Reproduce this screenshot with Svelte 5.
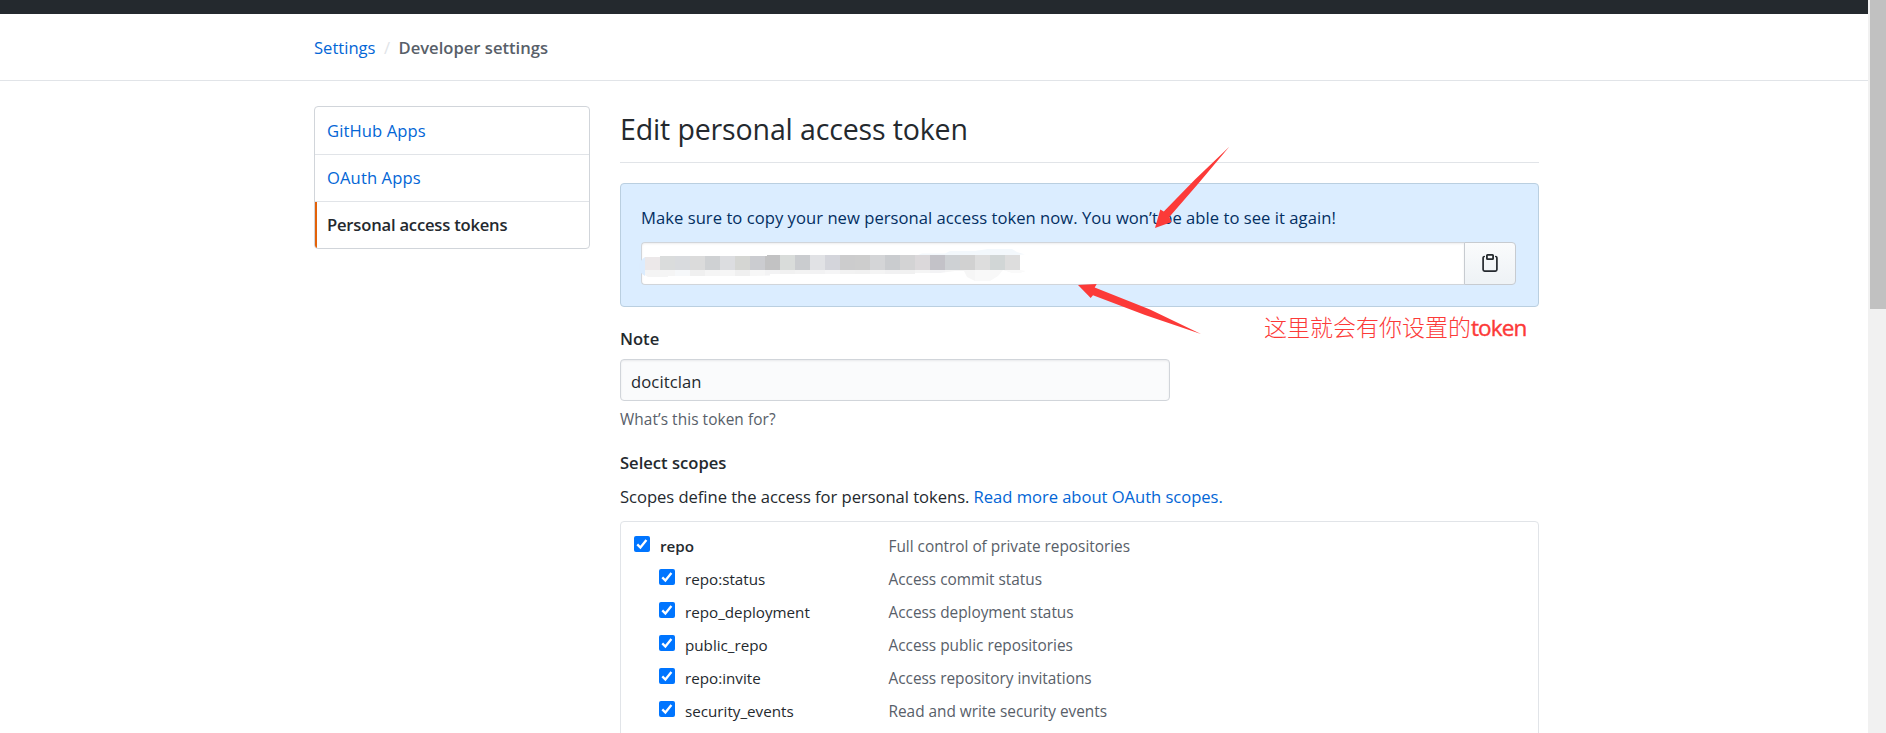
<script>
  const links = ['GitHub Apps', 'OAuth Apps', 'Personal access tokens'];
  const scopes = [
    ['repo', 'Full control of private repositories'],
    ['repo:status', 'Access commit status'],
    ['repo_deployment', 'Access deployment status'],
    ['public_repo', 'Access public repositories'],
    ['repo:invite', 'Access repository invitations'],
    ['security_events', 'Read and write security events']
  ];
  const upper = ['#ece8e9', '#dadcdc', '#d9dbde', '#dbdbdb', '#cfd1d3', '#dcdde0', '#d5d6d3', '#cbccd0', '#c2c2c3', '#d9dcda', '#cacccf', '#e1e2e5', '#d4d5db', '#cccccd', '#cdcdcd', '#d4d5d7', '#cacccf', '#d3d3d4', '#dbd8da', '#c3c2c8', '#ced1d4', '#d1d1d1', '#dddddd', '#d1d6d6', '#dddddd'];
  const lower = ['#f4f4f4', '#f5f5f5', '#f6f8fa', '#f0f0f0', '#f5f5f5', '#f6f6f6', '#f0f0f0', '#f7f7f7', '#f3f3f4', '#f1f1f1', '#f3f3f3', '#f2f2f3', '#f5f5f6', '#f2f2f2', '#f1f1f1', '#f4f4f4', '#f1f1f2', '#f1f1f1', '#f5f5f5', '#f3f3f5', '#f6f6f6', '#f6f6f6', '#f9f9f9', '#f8f8f8', '#f8f8f8'];
</script>

<div class="page">
  <div class="main">
    <div class="topbar"></div>
    <header>
      <div class="wrap crumbs"><a href="#settings">Settings</a><span class="slash">/</span><strong>Developer settings</strong></div>
    </header>
    <div class="wrap columns">
      <nav>
        {#each links as label, i}<a href="#nav" class:on={i === 2}>{label}</a>{/each}
      </nav>
      <section>
        <h1>Edit personal access token</h1>
        <div class="flash">
          <p>Make sure to copy your new personal access token now. You won’t be able to see it again!</p>
          <div class="group">
            <div class="token"></div>
            <button aria-label="Copy token">
              <svg width="16" height="18" viewBox="0 0 16 18" fill="none" stroke="#24292e">
                <path stroke-width="1.7" stroke-linecap="round" d="M2.200 2.500Q1.100 2.700 1.100 3.800V15.600Q1.100 17.100 2.600 17.100H13.400Q14.900 17.100 14.900 15.600V3.800Q14.900 2.700 13.800 2.500" />
                <rect x="4.900" y=".9" width="6.200" height="4.200" rx=".6" stroke-width="1.8" />
              </svg>
            </button>
          </div>
        </div>
        <h2 class="note">Note</h2>
        <div class="field">docitclan</div>
        <p class="hint">What’s this token for?</p>
        <h2 class="select">Select scopes</h2>
        <p class="define">Scopes define the access for personal tokens. <a href="#docs">Read more about OAuth scopes.</a></p>
        <div class="scopes">
          {#each scopes as [name, text], i}
            <div class="row" class:child={i > 0}>
              <div class="name">
                <svg width="16" height="16" viewBox="0 0 16 16">
                  <rect width="16" height="16" rx="2" fill="#0075ff" />
                  <path d="M3.300 8.400 6.400 11.500 12.400 4" fill="none" stroke="#fff" stroke-width="2.300" />
                </svg>
                <span>{name}</span>
              </div>
              <span class="desc">{text}</span>
            </div>
          {/each}
        </div>
      </section>
    </div>
  </div>
  <div class="scrollbar"><div class="thumb"></div></div>

  <svg class="marks" width="1868" height="733" viewBox="0 0 1868 733">
    <defs>
      <clipPath id="smear">
        <path d="M645 257H660V256H767V255H1020V270H1003L998 276 990 281H975L967 277 964 271 955 271 940 273H915V274H770V275.500L750 276H668V277H648L645 275Z" />
      </clipPath>
    </defs>
    <path fill="#dbecfe" d="M645 257Q639 261 639 267T645 276Z" />
    <path fill="#f3f8fc" d="M918 255 922 253.500H945L950 251H975L988 249H1012L1017 252 1025 254.500H1020V256H918Z" />
    <path fill="#fafafa" d="M1003 270H1020L1026 271 1020 273H1012Z" />
    <g clip-path="url(#smear)" shape-rendering="crispEdges">
      {#each upper as color, i}
        <rect x={645 + i * 15} y="255" width="15" height="15" fill={color} />
        <rect x={645 + i * 15} y="270" width="15" height="12" fill={lower[i]} />
      {/each}
    </g>
    <g fill="#fc3a38">
      <path d="M1155 228 1160.300 209.500 1163.800 211.500 1195 179.500 1229.300 146.700 1197.500 184.500 1169.300 217 1171.700 222Z" />
      <path d="M1078 285 1096.700 284 1094.700 287.500 1150 309.500 1201 334 1145 315 1093 295.200 1090.700 298Z" />
    </g>
  </svg>
  <div class="caption"><span>这里就会有你设置的</span><b>token</b></div>
</div>

<style>
  :global(body) { margin: 0; overflow: hidden; background: #fff; }
  .page { position: relative; height: 733px; overflow: hidden; display: flex; font-family: 'Open Sans', sans-serif; font-size: 16.6px; color: #24292e; }
  .main { width: 1868px; flex: none; }
  .topbar { height: 14px; background: #24292e; }
  header { height: 66px; border-bottom: 1px solid #e1e4e8; }
  .wrap { width: 1225px; margin: 0 0 0 314px; }
  .crumbs { display: flex; line-height: 67px; }
  .slash { width: 23px; text-align: center; color: #e1e4e8; }
  strong { font-weight: 600; color: #586069; }
  a { color: #0366d6; text-decoration: none; }
  .columns { display: flex; justify-content: space-between; padding-top: 25px; }
  nav { width: 274px; height: 141px; border: 1px solid #d1d5da; border-radius: 4px; display: flex; flex-direction: column; overflow: hidden; }
  nav a { box-sizing: border-box; height: 47px; line-height: 46px; padding: 0 0 0 12px; border-bottom: 1px solid #e1e4e8; letter-spacing: .1px; }
  nav a:first-child { height: 48px; padding-top: 1px; }
  nav a.on { height: 46px; border-bottom: 0; border-left: 2px solid #e36209; padding-left: 10px; color: #24292e; font-weight: 600; letter-spacing: -.2px; }
  section { width: 919px; }
  h1, h2, p { margin: 0; }
  h1 { font-size: 28.500px; font-weight: 400; line-height: 46px; letter-spacing: -.13px; padding-bottom: 10px; border-bottom: 1px solid #e1e4e8; }
  h2 { font-size: 16.600px; font-weight: 600; line-height: 26px; }
  .flash { box-sizing: border-box; height: 124px; margin-top: 20px; padding: 20px 22px 0 20px; border: 1px solid #bacfe0; border-radius: 4px; background: #dbedff; color: #032f62; }
  .flash p { line-height: 28px; letter-spacing: .04px; }
  .group { display: flex; height: 43px; margin-top: 10px; }
  .token { flex: 1; box-sizing: border-box; border: 1px solid #d1d5da; border-right: 0; border-radius: 4px 0 0 4px; background: #fff; box-shadow: inset 0 1px 2px rgba(27, 31, 35, .075); }
  button { box-sizing: border-box; width: 52px; padding: 0 0 2px; border: 1px solid #c7cbd0; border-radius: 0 4px 4px 0; background: linear-gradient(#fafbfc, #eff3f6 90%); display: flex; align-items: center; justify-content: center; }
  .note { margin-top: 19px; }
  .field { box-sizing: border-box; width: 550px; height: 42px; margin-top: 7px; padding: 2px 10px 0; line-height: 40px; border: 1px solid #d1d5da; border-radius: 4px; background: #fafbfc; box-shadow: inset 0 1px 2px rgba(27, 31, 35, .075); letter-spacing: .1px; }
  .hint { margin-top: 7px; line-height: 24px; font-size: 15.400px; letter-spacing: .07px; color: #586069; }
  .select { margin-top: 18px; }
  .define { margin-top: 8px; line-height: 26px; letter-spacing: -.04px; }
  .scopes { margin-top: 11px; height: 300px; padding-top: 8px; border: 1px solid #e1e4e8; border-radius: 4px; }
  .row { display: flex; height: 33px; line-height: 33px; padding-left: 13px; }
  .name { display: flex; width: 254.500px; gap: 10px; font-size: 15.200px; }
  .name svg { margin-top: 6px; flex: none; }
  .row:not(.child) .name { font-weight: 600; }
  .child { padding-left: 38px; }
  .child .name { width: 229.500px; }
  .desc { font-size: 15.400px; letter-spacing: -.02px; color: #586069; }
  .scrollbar { width: 18px; background: #f1f1f1; }
  .thumb { width: 16px; height: 309px; margin-left: 2px; background: #c1c1c1; }
  .marks { position: absolute; left: 0; top: 0; }
  .caption { position: absolute; left: 1264px; top: 308px; display: flex; align-items: baseline; line-height: 36px; font-size: 23px; color: #fc3a38; white-space: nowrap; }
  .caption span { font-family: 'Noto Sans CJK SC', sans-serif; font-weight: 300; }
  .caption b { font-weight: 500; font-size: 22.500px; letter-spacing: -.9px; -webkit-text-stroke: .4px #fc3a38; }
</style>
